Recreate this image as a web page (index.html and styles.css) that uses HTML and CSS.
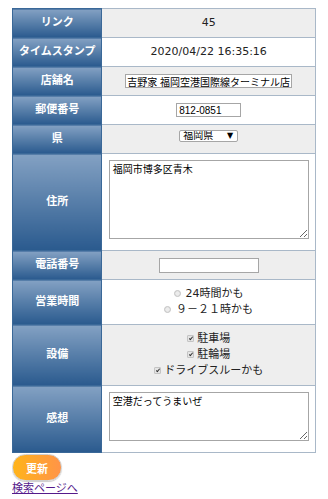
FILE: index.html
```html
<!DOCTYPE html>
<html lang="ja">
<head>
    <meta charset="UTF-8">
    <meta name="viewport" content="width=device-width, initial-scale=1.0">
    <title>店舗情報の編集</title>
    <link rel="stylesheet" href="styles.css">
</head>
<body>
    <form class="edit-form">
        <table class="detail">
            <tr>
                <th>リンク</th>
                <td>45</td>
            </tr>
            <tr>
                <th>タイムスタンプ</th>
                <td>2020/04/22 16:35:16</td>
            </tr>
            <tr>
                <th>店舗名</th>
                <td><input type="text" class="field shop-name" value="吉野家 福岡空港国際線ターミナル店"></td>
            </tr>
            <tr>
                <th>郵便番号</th>
                <td><input type="text" class="field zip" value="812-0851"></td>
            </tr>
            <tr>
                <th>県</th>
                <td>
                    <span class="select-wrap">
                        <select class="pref">
                            <option>福岡県</option>
                        </select>
                    </span>
                </td>
            </tr>
            <tr>
                <th>住所</th>
                <td><textarea class="memo address">福岡市博多区青木</textarea></td>
            </tr>
            <tr>
                <th>電話番号</th>
                <td><input type="text" class="field tel"></td>
            </tr>
            <tr>
                <th>営業時間</th>
                <td>
                    <label><input type="radio" class="radio" name="hours" disabled> 24時間かも</label><br>
                    <label><input type="radio" class="radio" name="hours" disabled> ９－２１時かも</label>
                </td>
            </tr>
            <tr>
                <th>設備</th>
                <td>
                    <label><input type="checkbox" class="check" checked disabled>駐車場</label><br>
                    <label><input type="checkbox" class="check" checked disabled>駐輪場</label><br>
                    <label><input type="checkbox" class="check" checked disabled>ドライブスルーかも</label>
                </td>
            </tr>
            <tr>
                <th>感想</th>
                <td><textarea class="memo impression">空港だってうまいぜ</textarea></td>
            </tr>
        </table>
        <button type="button" class="update-btn">更新</button>
    </form>
    <a class="back-link" href="#">検索ページへ</a>
</body>
</html>
```

FILE: styles.css
```css
body {
    margin: 8px 12px;
    font-family: 'DejaVu Sans', 'Noto Sans CJK JP', sans-serif;
    font-size: 11px;
    line-height: 16px;
    color: #222;
    background-color: #fff;
}
.edit-form {
    margin: 0;
}
.detail {
    width: 304px;
    border-collapse: collapse;
}
.detail th {
    width: 76px;
    padding: 6px;
    border: 1px solid #3a6898;
    background: linear-gradient(to bottom, #83a1c3, #2a5a8e);
    color: #fff;
    font-weight: bold;
    text-align: center;
    white-space: nowrap;
}
.detail td {
    padding: 6px;
    border: 1px solid #a9b8c8;
    border-left: none;
    text-align: center;
    background-color: #fff;
}
.detail tr:nth-child(odd) td {
    background-color: #eee;
}
.field,
.memo,
.pref {
    font-family: 'Liberation Sans', 'Noto Sans CJK JP', sans-serif;
    font-size: 10px;
    color: #000;
    border: 1px solid #a6a6a6;
    background-color: #fff;
    box-sizing: border-box;
}
.field {
    height: 14px;
    padding: 0 2px;
    vertical-align: middle;
}
.shop-name {
    width: 167px;
    padding: 0 1px;
}
.zip {
    width: 65px;
}
.tel {
    width: 100px;
    height: 15px;
}
.select-wrap {
    position: relative;
    display: inline-block;
    vertical-align: top;
    margin-top: -1px;
}
.pref {
    appearance: none;
    width: 59px;
    height: 12px;
    padding: 0 0 0 3px;
    border-radius: 2px;
    line-height: 10px;
    display: block;
}
.select-wrap::after {
    content: "▼";
    position: absolute;
    right: 5px;
    top: 1px;
    font-size: 8px;
    line-height: 10px;
    color: #000;
    pointer-events: none;
}
.memo {
    width: 200px;
    padding: 2px 3px;
    line-height: 13px;
}
.address {
    height: 79px;
}
.impression {
    height: 49px;
}
.radio {
    appearance: none;
    width: 7px;
    height: 7px;
    margin: 0 1px 0 0;
    border: 1px solid #c4c4c4;
    border-radius: 50%;
    background: radial-gradient(circle, #ececec 40%, #d8d8d8);
    vertical-align: 0;
}
.check {
    appearance: none;
    position: relative;
    width: 7px;
    height: 7px;
    margin: 0 3px 0 0;
    border: 1px solid #c4c4c4;
    border-radius: 1px;
    background-color: #e4e4e4;
    vertical-align: 0;
}
.check:checked::after {
    content: "";
    position: absolute;
    left: 2px;
    top: 0;
    width: 1px;
    height: 3px;
    border: solid #333;
    border-width: 0 1px 1px 0;
    transform: rotate(40deg);
}
.update-btn {
    display: block;
    width: 50px;
    height: 27px;
    margin: 1px 0 0;
    padding: 0;
    border: 1px solid #d0d0d0;
    border-radius: 14px;
    background: linear-gradient(to right, #ffb41a, #ff9448);
    color: #fff;
    font-family: 'Noto Sans CJK JP', sans-serif;
    font-size: 11px;
    font-weight: bold;
    box-shadow: 0 1px 1px rgba(0, 0, 0, 0.2);
    cursor: pointer;
}
.back-link {
    display: inline-block;
    margin-top: 1px;
    color: #551a8b;
    font-size: 11px;
    line-height: 13px;
}
```
